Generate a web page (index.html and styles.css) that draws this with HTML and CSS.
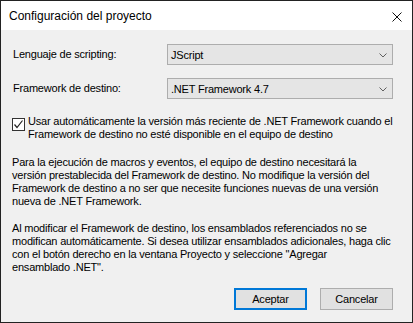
FILE: index.html
```html
<!DOCTYPE html>
<html lang="es">
<head>
<meta charset="utf-8">
<title>Configuración del proyecto</title>
<link rel="stylesheet" href="styles.css">
</head>
<body>
<div class="window">
  <div class="titlebar">
    <span class="title">Configuración del proyecto</span>
    <svg class="close" width="10" height="10" viewBox="0 0 10 10"><path d="M0.5 0.5 L9.5 9.5 M9.5 0.5 L0.5 9.5" stroke="#111" stroke-width="1"/></svg>
  </div>
  <div class="content">
    <div class="row">
      <span class="label">Lenguaje de scripting:</span>
      <div class="combo">
        <span>JScript</span>
        <svg width="8" height="5" viewBox="0 0 8 5"><path d="M0.5 0.5 L4 4 L7.5 0.5" fill="none" stroke="#606060" stroke-width="1"/></svg>
      </div>
    </div>
    <div class="row row2">
      <span class="label">Framework de destino:</span>
      <div class="combo">
        <span>.NET Framework 4.7</span>
        <svg width="8" height="5" viewBox="0 0 8 5"><path d="M0.5 0.5 L4 4 L7.5 0.5" fill="none" stroke="#606060" stroke-width="1"/></svg>
      </div>
    </div>
    <div class="check">
      <span class="box"><svg width="11" height="11" viewBox="0 0 11 11"><path d="M1.5 5.5 L4 8.5 L9.5 1.5" fill="none" stroke="#222" stroke-width="1.2"/></svg></span>
      <span class="check-text">Usar automáticamente la versión más reciente de .NET Framework cuando el<br>Framework de destino no esté disponible en el equipo de destino</span>
    </div>
    <p class="note">Para la ejecución de macros y eventos, el equipo de destino necesitará la<br>versión prestablecida del Framework de destino. No modifique la versión del<br>Framework de destino a no ser que necesite funciones nuevas de una versión<br>nueva de .NET Framework.</p>
    <p class="note note2">Al modificar el Framework de destino, los ensamblados referenciados no se<br>modifican automáticamente. Si desea utilizar ensamblados adicionales, haga clic<br>con el botón derecho en la ventana Proyecto y seleccione "Agregar<br>ensamblado .NET".</p>
    <div class="buttons">
      <button class="btn default">Aceptar</button>
      <button class="btn">Cancelar</button>
    </div>
  </div>
</div>
</body>
</html>
```

FILE: styles.css
```css
body {
	margin: 0;
	font-family: "Liberation Sans", Arial, sans-serif;
	font-size: 11px;
	color: #000;
}
.window {
	width: 413px;
	height: 323px;
	box-sizing: border-box;
	border: 1px solid #222;
	background-color: #f0f0f0;
	display: flex;
	flex-direction: column;
	overflow: hidden;
}
.titlebar {
	height: 29px;
	flex-shrink: 0;
	background-color: #fff;
	display: flex;
	align-items: center;
	justify-content: space-between;
	padding: 0 10px 0 8px;
}
.title {
	font-size: 12px;
	margin-top: 1px;
}
.close {
	margin-top: 2px;
}
.content {
	flex: 1;
	display: flex;
	flex-direction: column;
	padding: 14px 19px 12px 11px;
	line-height: 13px;
	letter-spacing: -0.2px;
}
.row {
	display: flex;
	align-items: center;
}
.row2 {
	margin-top: 13px;
}
.label {
	width: 154px;
	padding-left: 1px;
}
.combo {
	flex: 1;
	height: 21px;
	box-sizing: border-box;
	border: 1px solid #adadad;
	background-color: #e5e5e5;
	display: flex;
	align-items: center;
	justify-content: space-between;
	padding: 1px 5px 0 3px;
}
.check {
	display: flex;
	margin-top: 16px;
	white-space: nowrap;
}
.box {
	width: 13px;
	height: 13px;
	box-sizing: border-box;
	border: 1px solid #333;
	background-color: #fff;
	margin-top: 3px;
	margin-right: 3px;
	flex-shrink: 0;
}
.box svg {
	display: block;
}
.note {
	margin: 15px 0 0 0;
	white-space: nowrap;
}
.note2 {
	margin-top: 14px;
}
.buttons {
	margin-top: auto;
	display: flex;
	justify-content: flex-end;
	gap: 13px;
}
.btn {
	width: 73px;
	height: 22px;
	box-sizing: border-box;
	border: 1px solid #adadad;
	background-color: #e1e1e1;
	font-family: "Liberation Sans", Arial, sans-serif;
	font-size: 11px;
	letter-spacing: -0.2px;
	color: #000;
	padding: 0;
}
.default {
	border: 2px solid #0078d7;
}
```
